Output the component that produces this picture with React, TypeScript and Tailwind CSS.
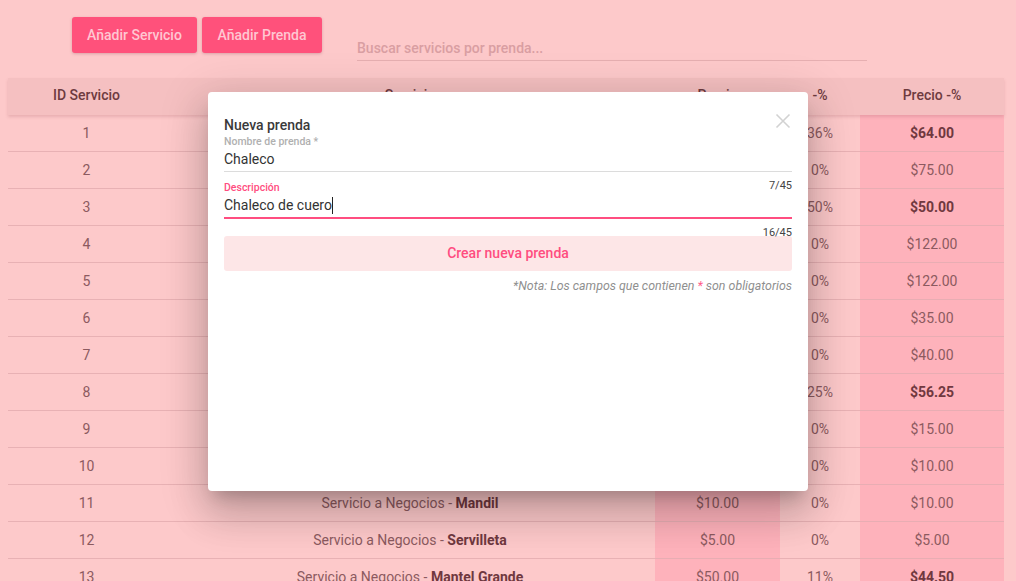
import React from "react";

type Row = { id: number; prenda: string; precio: string; desc: string; final: string; bold: boolean };

const rows: Row[] = [
  { id: 1, prenda: "Camisa", precio: "$100.00", desc: "36%", final: "$64.00", bold: true },
  { id: 2, prenda: "Pantalón", precio: "$75.00", desc: "0%", final: "$75.00", bold: false },
  { id: 3, prenda: "Saco", precio: "$100.00", desc: "50%", final: "$50.00", bold: true },
  { id: 4, prenda: "Vestido", precio: "$122.00", desc: "0%", final: "$122.00", bold: false },
  { id: 5, prenda: "Abrigo", precio: "$122.00", desc: "0%", final: "$122.00", bold: false },
  { id: 6, prenda: "Falda", precio: "$35.00", desc: "0%", final: "$35.00", bold: false },
  { id: 7, prenda: "Blusa", precio: "$40.00", desc: "0%", final: "$40.00", bold: false },
  { id: 8, prenda: "Chamarra", precio: "$75.00", desc: "25%", final: "$56.25", bold: true },
  { id: 9, prenda: "Corbata", precio: "$15.00", desc: "0%", final: "$15.00", bold: false },
  { id: 10, prenda: "Bufanda", precio: "$10.00", desc: "0%", final: "$10.00", bold: false },
  { id: 11, prenda: "Mandil", precio: "$10.00", desc: "0%", final: "$10.00", bold: false },
  { id: 12, prenda: "Servilleta", precio: "$5.00", desc: "0%", final: "$5.00", bold: false },
  { id: 13, prenda: "Mantel Grande", precio: "$50.00", desc: "11%", final: "$44.50", bold: true },
];

export default function App() {
  return (
    <div
      className="relative w-[1016px] h-[581px] overflow-hidden bg-[#fdc9ca] text-[14px]"
      style={{ fontFamily: "Roboto, 'Liberation Sans', sans-serif" }}
    >
      {/* Top bar */}
      <div className="flex items-start pt-[17px] pl-[72px] h-[78px]">
        <button className="h-[36px] w-[125px] rounded-[3px] bg-[#ff517b] text-[#ffc6d2] font-medium text-[14px] shadow-[0_1px_3px_rgba(120,40,60,0.25)]">
          Añadir Servicio
        </button>
        <button className="ml-[5px] h-[36px] w-[120px] rounded-[3px] bg-[#ff517b] text-[#ffc6d2] font-medium text-[14px] shadow-[0_1px_3px_rgba(120,40,60,0.25)]">
          Añadir Prenda
        </button>
        <div className="ml-[35px] mt-[20px] w-[510px] h-[24px] border-b border-[#e6afb1] flex items-center">
          <span className="text-[#d99ea2] font-medium text-[14px]">Buscar servicios por prenda...</span>
        </div>
      </div>

      {/* Table */}
      <div className="ml-[8px] w-[996px]">
        <div className="relative z-[1] grid grid-cols-[157px_490px_125px_80px_144px] h-[37px] pb-[2px] bg-[#f5c0c1] text-[#6e3b40] font-medium shadow-[0_2px_3px_rgba(150,70,80,0.2)]">
          <div className="flex items-center justify-center">ID Servicio</div>
          <div className="flex items-center justify-center">Servicio</div>
          <div className="flex items-center justify-center">Precio</div>
          <div className="flex items-center justify-center">-%</div>
          <div className="flex items-center justify-center">Precio -%</div>
        </div>
        {rows.map((r) => (
          <div
            key={r.id}
            className="grid grid-cols-[157px_490px_125px_80px_144px] h-[37px] text-[#8c5a5f]"
          >
            <div className="flex items-center justify-center border-b border-[#e8b1b4]">{r.id}</div>
            <div className="flex items-center justify-center border-b border-[#e8b1b4]">
              <span>
                Servicio a Negocios - <b className="font-bold text-[#70383f]">{r.prenda}</b>
              </span>
            </div>
            <div className="flex items-center justify-center bg-[#feb2bb] border-b border-[#e8adb3]">{r.precio}</div>
            <div className="flex items-center justify-center border-b border-[#e8b1b4]">{r.desc}</div>
            <div
              className={
                "flex items-center justify-center bg-[#feb2bb] border-b border-[#e8adb3] " +
                (r.bold ? "font-bold text-[#70383f]" : "")
              }
            >
              {r.final}
            </div>
          </div>
        ))}
      </div>

      {/* Modal */}
      <div className="absolute z-10 left-[208px] top-[92px] w-[600px] h-[399px] bg-white rounded-[4px] shadow-[0_11px_15px_-7px_rgba(0,0,0,0.2),0_24px_38px_3px_rgba(0,0,0,0.14),0_9px_46px_8px_rgba(0,0,0,0.12)] px-[16px] pt-[25px]">
        <button className="absolute right-[17px] top-[21px] w-[16px] h-[16px] flex items-center justify-center">
          <svg width="16" height="16" viewBox="0 0 16 16" fill="none" stroke="#d2d2d2" strokeWidth="1.6">
            <path d="M1.5 1.5 L14.5 14.5 M14.5 1.5 L1.5 14.5" />
          </svg>
        </button>
        <div className="text-[14px] leading-[16px] font-medium text-[#3a3a3a]">Nueva prenda</div>
        <div className="relative">
          <div className="mt-[3px] text-[10.5px] leading-[12px] font-medium text-[#b0b0b0]">Nombre de prenda *</div>
          <div className="mt-[3px] text-[14px] leading-[16px] text-[#333]">Chaleco</div>
          <div className="mt-[4px] h-px bg-[#dcdcdc]" />
          <div className="absolute right-0 top-[calc(100%+7px)] text-[11px] leading-[13px] text-[#444]">7/45</div>
        </div>
        <div className="relative mt-[10px]">
          <div className="text-[10.5px] leading-[12px] font-medium text-[#ff4d80]">Descripción</div>
          <div className="mt-[3px] h-[16px] text-[14px] leading-[16px] text-[#333] flex items-center">
            <span>Chaleco de cuero</span>
            <span className="inline-block w-px h-[17px] bg-[#222] shrink-0" />
          </div>
          <div className="mt-[4px] h-[2px] bg-[#ff4d80]" />
          <div className="absolute right-0 top-[calc(100%+7px)] text-[11px] leading-[13px] text-[#444]">16/45</div>
        </div>
        <button className="mt-[17px] w-full h-[35px] rounded-[3px] bg-[#fde6e7] text-[#ff4d80] font-medium text-[14px]">
          Crear nueva prenda
        </button>
        <div className="mt-[8px] text-right italic text-[12.4px] leading-[14px] text-[#8f8f8f]">
          *Nota: Los campos que contienen <span className="text-[#ff5c8a]">*</span> son obligatorios
        </div>
      </div>
    </div>
  );
}
